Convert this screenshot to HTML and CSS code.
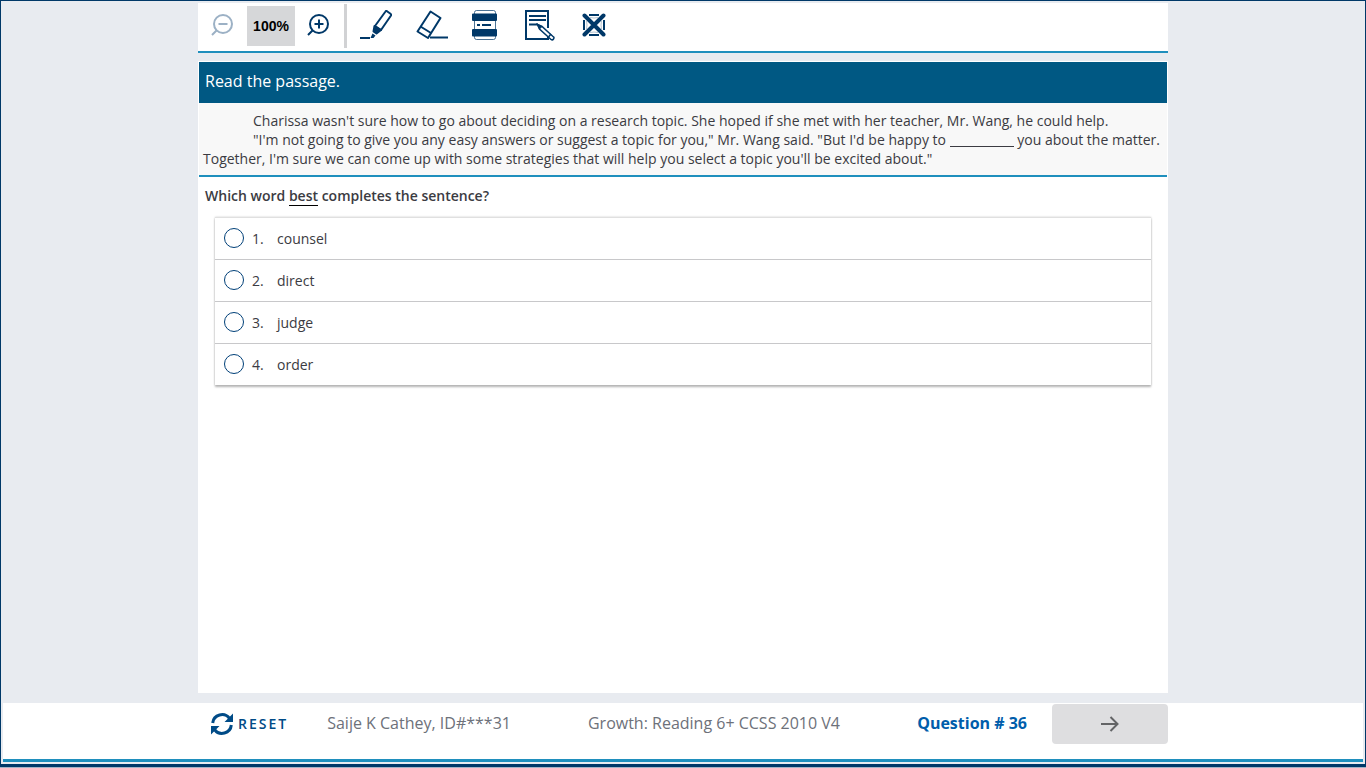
FILE: index.html
```html
<!DOCTYPE html>
<html lang="en">
<head>
<meta charset="utf-8">
<title>Growth: Reading 6+ CCSS 2010 V4</title>
<link rel="stylesheet" href="styles.css">
</head>
<body>
<div class="frame">
  <header class="toolbar column">
    <button class="tool" aria-label="Zoom out" disabled>
      <svg width="22" height="24" viewBox="0 0 22 24" fill="none" stroke="currentColor" stroke-width="2"><circle cx="12" cy="11" r="9"/><path d="M7.500 11h9M5.500 17.500L1 22"/></svg>
    </button>
    <output class="zoom-level">100%</output>
    <button class="tool" aria-label="Zoom in">
      <svg width="22" height="24" viewBox="0 0 22 24" fill="none" stroke="currentColor" stroke-width="2"><circle cx="12" cy="11" r="9"/><path d="M7.500 11h9M12 6.500v9M5.500 17.500L1 22"/></svg>
    </button>
    <span class="divider"></span>
    <div class="tools">
      <button class="tool" aria-label="Highlighter">
        <svg width="32" height="30" viewBox="0 0 32 30" fill="none" stroke="currentColor" stroke-width="2" stroke-linejoin="round"><path d="M25.500 1.500L15 16l6 4L31 5.500q.5-1-.5-1.700L27 1.200q-1-.5-1.500.3z"/><path d="M14.500 16l-1 5.500 3 2 4.500-3.500z" fill="currentColor"/><path d="M12.500 23.500l3 2-2 2.500h-3z" fill="currentColor" stroke="none"/><path d="M0 28h10"/></svg>
      </button>
      <button class="tool" aria-label="Eraser">
        <svg width="32" height="30" viewBox="0 0 32 30" fill="none" stroke="currentColor" stroke-width="2" stroke-linejoin="round"><path d="M14.500 1.500L24.500 8 12 28 1.500 21.500z"/><path d="M4.500 16.500L15 23M14 27.500h18"/></svg>
      </button>
      <button class="tool" aria-label="Line reader">
        <svg width="26" height="30" viewBox="0 0 26 30" fill="none" stroke="currentColor"><rect x="2.500" y=".5" width="21" height="29" rx="2" opacity=".7"/><path d="M1 3.500h23q1 0 1 1V10q0 1-1 1H1q-1 0-1-1V4.500q0-1 1-1zM1 19h23q1 0 1 1v5.500q0 1-1 1H1q-1 0-1-1V20q0-1 1-1z" fill="currentColor" stroke="none"/><path d="M5 15h3M10 15h9" stroke-width="2"/></svg>
      </button>
      <button class="tool" aria-label="Notepad">
        <svg width="36" height="31" viewBox="-3 0 36 31" fill="none" stroke="currentColor" stroke-width="2"><path d="M23 18V1H1v28h22v-3"/><path d="M4 6h17M4 10h17M4 14.500h9"/><path d="M12.500 14.500l2 4.500L26 29.500q1.500 1 2.500-.5t0-2L17 16.500z" fill="white" stroke-width="1.500"/><path d="M12 14l5 2.500-2.500 2.500z" fill="currentColor" stroke-width="1"/><path d="M23.500 27l2.500-3" stroke-width="1.500"/></svg>
      </button>
      <button class="tool" aria-label="Answer eliminator">
        <svg width="24" height="24" viewBox="0 0 24 24" fill="none" stroke="currentColor"><path d="M7 2h10M7 22h10M2 7v10M22 7v10" stroke-width="2"/><path d="M8 4.500q4 1 8 0M8 19.500q4-1 8 0M4.500 8q1 4 0 8M19.500 8q-1 4 0 8" stroke-width="1" opacity=".3"/><path d="M2.500 2.500l19 19M21.500 2.500l-19 19" stroke-width="4" stroke-linecap="round"/></svg>
      </button>
    </div>
  </header>

  <main class="content column">
    <h1 class="directions">Read the passage.</h1>
    <section class="passage">
      <p class="indent">Charissa wasn't sure how to go about deciding on a research topic. She hoped if she met with her teacher, Mr. Wang, he could help.</p>
      <p class="indent">"I'm not going to give you any easy answers or suggest a topic for you," Mr. Wang said. "But I'd be happy to <span class="blank"></span> you about the matter. Together, I'm sure we can come up with some strategies that will help you select a topic you'll be excited about."</p>
    </section>
    <h2 class="question" id="question">Which word <span class="stress">best</span> completes the sentence?</h2>
    <div class="answers" role="radiogroup" aria-labelledby="question">
      <label class="answer"><input type="radio" name="answer"><span class="number">1.</span><span>counsel</span></label>
      <label class="answer"><input type="radio" name="answer"><span class="number">2.</span><span>direct</span></label>
      <label class="answer"><input type="radio" name="answer"><span class="number">3.</span><span>judge</span></label>
      <label class="answer"><input type="radio" name="answer"><span class="number">4.</span><span>order</span></label>
    </div>
  </main>

  <footer class="footer">
    <div class="footer-row column">
      <button class="reset">
        <svg width="22" height="22" viewBox="0 0 22 22" fill="none" stroke="currentColor" stroke-width="3"><path d="M1.700 10A9.300 9.300 0 0 1 18.500 5.500M20.300 12A9.300 9.300 0 0 1 3.500 16.500"/><path d="M22 .5V9h-8.500zM0 21.500V13h8.500z" fill="currentColor" stroke="none"/></svg>
        <span class="label">RESET</span>
      </button>
      <span class="label student">Saije K Cathey, ID#***31</span>
      <span class="label test-name">Growth: Reading 6+ CCSS 2010 V4</span>
      <strong class="label count">Question # 36</strong>
      <button class="next" aria-label="Next question" disabled>
        <svg width="18" height="16" viewBox="0 0 18 16" fill="none" stroke="currentColor" stroke-width="2"><path d="M0 8h16.500M9.500 1l7 7-7 7"/></svg>
      </button>
    </div>
  </footer>
</div>
</body>
</html>
```

FILE: styles.css
```css
* {
  box-sizing: border-box;
}

body {
  margin: 0;
  background: #a3b3c6;
  color: #3b3b42;
  font: 14px/19px "Open Sans", "Noto Sans", sans-serif;
}

h1, h2, p {
  margin: 0;
}

button {
  padding: 0;
  border: 0;
  background: none;
  color: inherit;
  font: inherit;
}

svg {
  display: block;
}

.frame {
  display: flex;
  flex-direction: column;
  min-height: calc(100vh - 1px);
  padding: 2px;
  border: 1px solid #003868;
  border-bottom-width: 3px;
  background: #e8ebf0;
}

.column {
  width: 100%;
  max-width: 970px;
  margin: 0 auto;
}

.toolbar {
  display: flex;
  align-items: center;
  height: 50px;
  padding: 0 13px 2px;
  border-bottom: 2px solid #1f8fbd;
  background: #fff;
  color: #003868;
}

.tool {
  padding-bottom: 2px;
}

.tool:disabled {
  color: #9cb1c5;
}

.zoom-level {
  width: 48px;
  margin: 0 12px 0 14px;
  background: #d6d7d9;
  color: #000;
  font: bold 14px/40px "Liberation Sans", sans-serif;
  text-align: center;
}

.divider {
  width: 3px;
  height: 44px;
  margin: 0 13px 0 15px;
  background: #d1d2d4;
}

.tools {
  display: flex;
  align-items: center;
  gap: 24px;
}

.content {
  flex: 1;
  margin-top: 8px;
  margin-bottom: 10px;
  padding: 1px;
  background: #fff;
}

.directions {
  padding: 0 6px 2px;
  background: #005883;
  color: #fff;
  font-size: 16px;
  font-weight: 400;
  line-height: 39px;
}

.passage {
  padding: 8px 4px 7px;
  border-bottom: 2px solid #1f8fbd;
  background: #f8f8f8;
}

.indent {
  text-indent: 50px;
}

.blank {
  display: inline-block;
  width: 64px;
  height: 13px;
  border-bottom: 1px solid #3b3b42;
  vertical-align: -2px;
}

.question {
  padding: 9px 6px 12px;
  font-size: 14px;
  font-weight: 600;
  line-height: 19px;
}

.stress {
  border-bottom: 1px solid #000;
}

.answers {
  margin: 0 16px;
  border-top: 1px solid #e0e0e0;
  box-shadow: 0 2px 2px #b5b5b5, 0 0 2px #ccc;
}

.answer {
  display: flex;
  align-items: center;
  height: 42px;
  padding: 0 9px;
  border-bottom: 1px solid #c8c8ca;
  background: #fff;
}

.answer:last-child {
  height: 41px;
  border-bottom: 0;
}

.answer input {
  appearance: none;
  width: 20px;
  height: 20px;
  margin: 0 8px 2px 0;
  border: 1px solid #003f78;
  border-radius: 50%;
}

.answer input:checked {
  background: #003f78;
}

.number {
  width: 25px;
}

.footer {
  height: 59px;
  border-bottom: 3px solid #1f8fbd;
  background: #fff;
}

.footer-row {
  display: flex;
  align-items: center;
  padding-top: 1px;
  color: #6d717a;
  font-size: 16px;
}

.label {
  padding-bottom: 2px;
}

.reset {
  display: flex;
  align-items: center;
  gap: 5px;
  margin-left: 13px;
  color: #004b87;
  font-size: 14px;
  font-weight: 600;
  letter-spacing: 2px;
}

.student {
  margin-left: 39px;
}

.test-name {
  margin-left: 77px;
}

.count {
  margin-left: auto;
  color: #005dab;
}

.next {
  display: grid;
  place-items: center;
  width: 116px;
  height: 40px;
  margin-left: 25px;
  border-radius: 4px;
  background: #dedee0;
  color: #636466;
}
```
